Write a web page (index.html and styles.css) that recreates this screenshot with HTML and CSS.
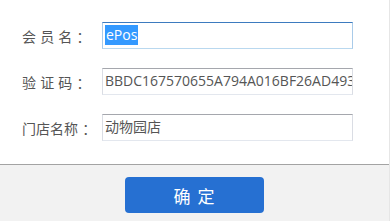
FILE: index.html
```
<!DOCTYPE html>
<html lang="zh-CN">
<head>
    <meta charset="UTF-8">
    <meta name="viewport" content="width=device-width, initial-scale=1.0">
    <title>会员登录</title>
    <link rel="stylesheet" href="styles.css">
</head>
<body>
    <div class="dialog">
        <div class="form">
            <div class="form-row">
                <label class="form-label">会 员 名 ：</label>
                <div class="field field-focus"><span class="field-selected">ePos</span></div>
            </div>
            <div class="form-row">
                <label class="form-label">验 证 码 ：</label>
                <div class="field">BBDC167570655A794A016BF26AD493E1</div>
            </div>
            <div class="form-row">
                <label class="form-label">门店名称 ：</label>
                <div class="field">动物园店</div>
            </div>
        </div>

        <div class="footer">
            <button class="ok-btn">确 定</button>
        </div>
    </div>
</body>
</html>
```

FILE: styles.css
```
body {
    margin: 0;
    background-color: #fff;
    font-family: "Open Sans", "Noto Sans CJK SC", sans-serif;
}

.dialog {
    width: 389px;
    height: 221px;
    border-right: 1px solid #e6e6e6;
    display: flex;
    flex-direction: column;
}

.form {
    padding: 22px 0 0 22px;
    height: 142px;
    display: flex;
    flex-direction: column;
    gap: 19px;
}

.form-row {
    display: flex;
    align-items: center;
    height: 27px;
}

.form-label {
    width: 80px;
    font-family: "Noto Sans CJK SC", sans-serif;
    font-size: 14px;
    word-spacing: 1px;
    color: #555;
    white-space: pre;
}

.field {
    box-sizing: border-box;
    width: 251px;
    height: 27px;
    padding: 0 2px;
    border: 1px solid;
    border-color: #a5a7ad #dadde4 #e3e7ee #dadde4;
    font-size: 14px;
    line-height: 24px;
    color: #555;
    white-space: nowrap;
    overflow: hidden;
}

.field-focus {
    border-color: #3d7bbf #a9cbe9 #b9d8ef #a9cbe9;
}

.field-selected {
    display: inline-block;
    line-height: 20px;
    padding: 0 1px;
    background-color: #3399ff;
    color: #fff;
}

.footer {
    flex: 1;
    border-top: 1px solid #a3a3a3;
    background-color: #f2f2f2;
    display: flex;
    justify-content: center;
    padding: 12px 0 0 0;
}

.ok-btn {
    width: 139px;
    height: 36px;
    margin-left: -1px;
    border: none;
    border-radius: 4px;
    background-color: #2670d2;
    color: #fff;
    font-family: "Noto Sans CJK SC", sans-serif;
    font-size: 17px;
    word-spacing: 3px;
    white-space: pre;
}
```
